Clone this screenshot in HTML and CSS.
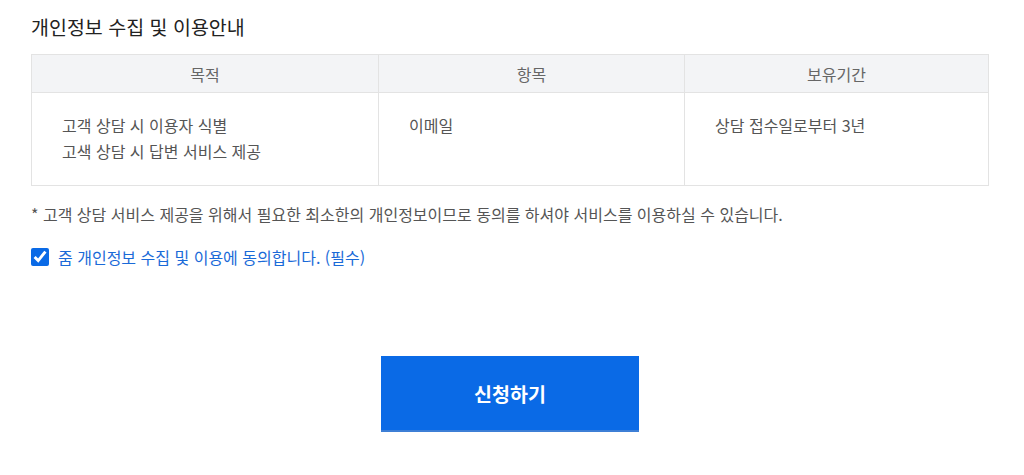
FILE: index.html
```html
<!DOCTYPE html>
<html lang="ko">
  <head>
    <meta charset="UTF-8" />
    <title>개인정보 수집 및 이용안내</title>
    <link rel="stylesheet" href="styles.css">
  </head>
  <body>
    <div class="privacy">
      <h3 class="privacy_title">개인정보 수집 및 이용안내</h3>

      <table class="privacy_table">
        <colgroup>
          <col class="col_purpose">
          <col class="col_item">
          <col class="col_period">
        </colgroup>
        <thead>
          <tr>
            <th>목적</th>
            <th>항목</th>
            <th>보유기간</th>
          </tr>
        </thead>
        <tbody>
          <tr>
            <td>고객 상담 시 이용자 식별<br>고색 상담 시 답변 서비스 제공</td>
            <td>이메일</td>
            <td>상담 접수일로부터 3년</td>
          </tr>
        </tbody>
      </table>

      <p class="privacy_note">* 고객 상담 서비스 제공을 위해서 필요한 최소한의 개인정보이므로 동의를 하셔야 서비스를 이용하실 수 있습니다.</p>

      <label class="agree">
        <input type="checkbox" checked>
        <span>줌 개인정보 수집 및 이용에 동의합니다. (필수)</span>
      </label>

      <div class="submit_wrap">
        <button class="btn_submit" type="button">신청하기</button>
      </div>
    </div>
  </body>
</html>
```

FILE: styles.css
```css
body {
  margin: 0;
  background: #fff;
  font-family: "Noto Sans CJK KR", "Noto Sans", sans-serif;
  color: #555;
}

.privacy {
  width: 958px;
  padding: 14px 0 0 31px;
}

.privacy_title {
  margin: 0 0 14px;
  font-size: 19.5px;
  font-weight: 400;
  line-height: 26px;
  color: #222;
}

.privacy_table {
  width: 100%;
  border-collapse: collapse;
  table-layout: fixed;
  font-size: 16px;
}
.col_purpose { width: 347px; }
.col_item { width: 306px; }

.privacy_table th,
.privacy_table td {
  border: 1px solid #e3e3e3;
}
.privacy_table th {
  height: 37px;
  padding: 0;
  background-color: #f3f4f6;
  font-weight: 400;
  color: #666;
}
.privacy_table td {
  height: 73px;
  vertical-align: top;
  padding: 19px 30px 0 30px;
  line-height: 26px;
  color: #555;
}

.privacy_note {
  margin: 17px 0 0;
  font-size: 16px;
  line-height: 22px;
  color: #555;
}

.agree {
  display: flex;
  align-items: center;
  gap: 9px;
  margin-top: 20px;
  font-size: 16px;
  color: #1a6ad8;
  cursor: pointer;
}
.agree input {
  width: 18px;
  height: 18px;
  margin: 0;
  accent-color: #0a6ae6;
}

.submit_wrap {
  display: flex;
  justify-content: center;
  margin-top: 87px;
}
.btn_submit {
  width: 258px;
  height: 76px;
  border: none;
  border-bottom: 2px solid #3d7fd6;
  background-color: #0a6ae6;
  color: #fff;
  font-family: inherit;
  font-size: 19.5px;
  font-weight: 700;
  cursor: pointer;
}
```
